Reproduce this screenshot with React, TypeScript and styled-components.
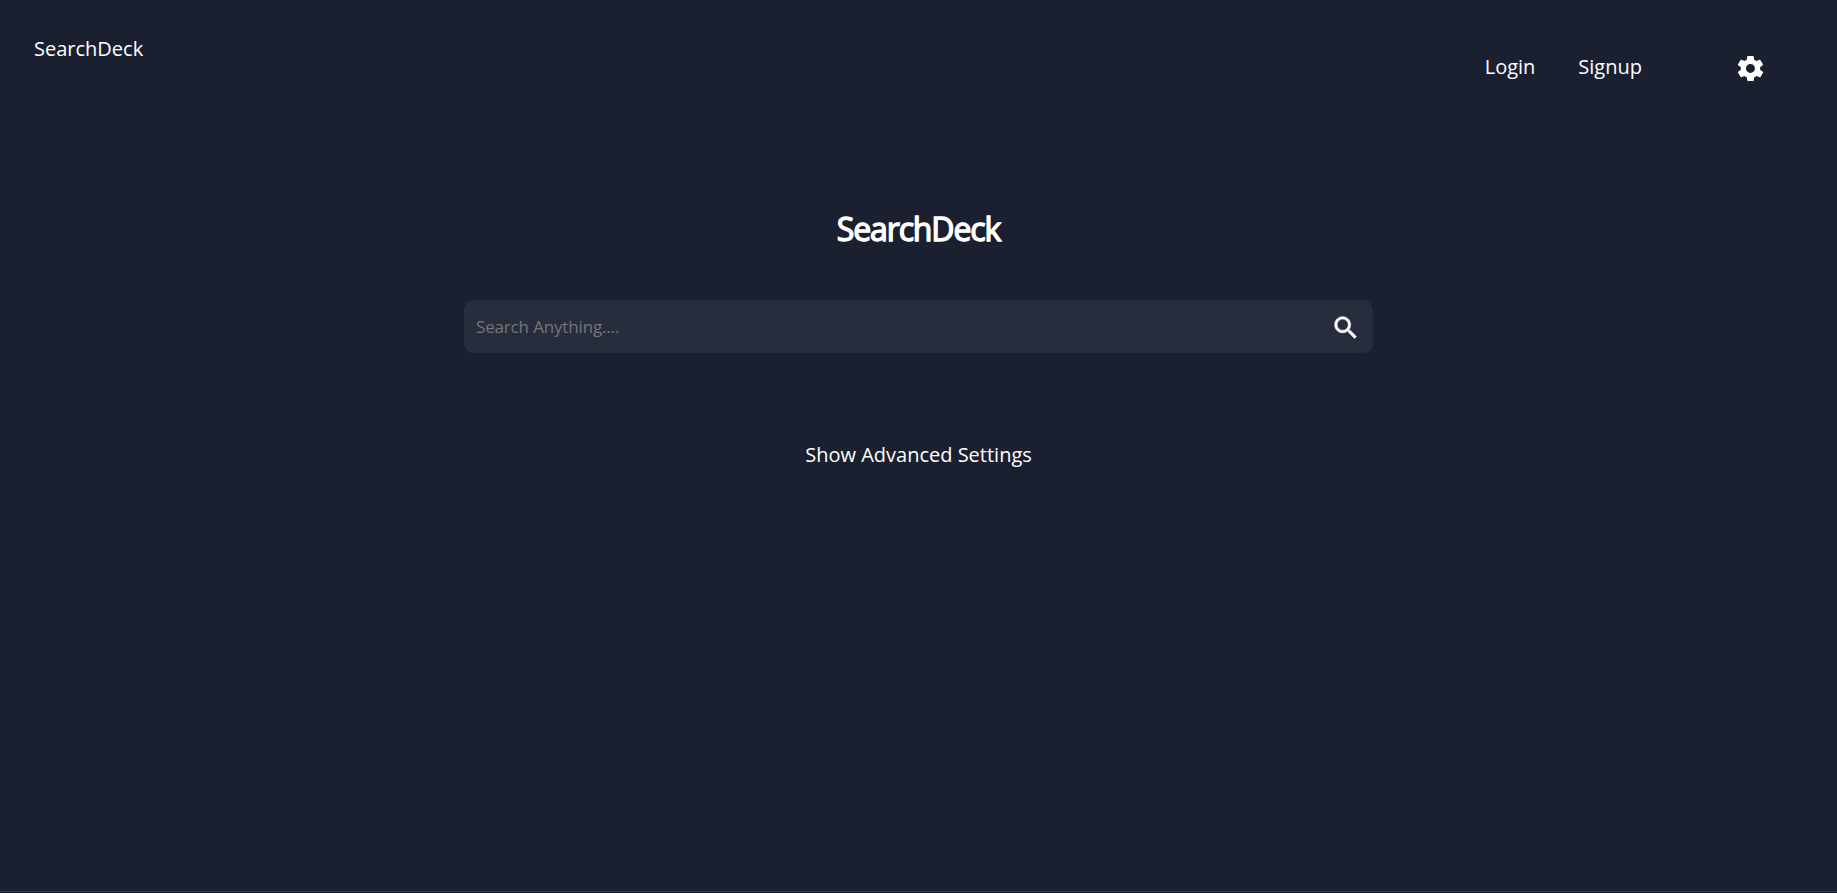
import React from "react";
import styled, { createGlobalStyle } from "styled-components";
import { IoMdSearch, IoMdSettings } from "react-icons/io";

const GlobalStyle = createGlobalStyle`
  * { box-sizing: border-box; }
  body { margin: 0; background: #1b2031; color: #fff; font-family: "Open Sans", sans-serif; font-size: 20px; }
`;
const Page = styled.div`
  height: 892px;
  overflow: hidden;
  display: flex;
  flex-direction: column;
  border-bottom: 1px solid #3a3e4b;
`;
const Header = styled.header`
  display: flex;
  justify-content: space-between;
  height: 134px;
  padding: 35px 71px 0 34px;
  line-height: 27px;
`;
const Brand = styled.span``;
const Nav = styled.nav`
  display: flex;
  align-items: center;
  height: 64px;
`;
const NavLink = styled.a`
  margin: -2px 43px 0 0;
`;
const GearIcon = styled(IoMdSettings)`
  width: 31px;
  height: 31px;
  margin: 2px 0 0 50px;
`;
const Main = styled.main`
  display: flex;
  flex-direction: column;
  align-items: center;
`;
const Title = styled.h1`
  margin: 73px 0 0;
  font-size: 32px;
  line-height: 43px;
  font-weight: 400;
  letter-spacing: -1.12px;
  -webkit-text-stroke: 1.35px #fff;
`;
const SearchBar = styled.form`
  display: flex;
  align-items: center;
  width: 909px;
  height: 53px;
  margin-top: 50px;
  padding: 0 13px 0 12px;
  border-radius: 10px;
  background: #282d3e;
`;
const SearchInput = styled.input`
  flex: 1;
  padding: 0;
  border: 0;
  outline: 0;
  background: transparent;
  color: #fff;
  font: 17px "Open Sans", sans-serif;
  letter-spacing: -0.16px;
  &::placeholder { color: #757575; }
`;
const SearchIcon = styled(IoMdSearch)`
  width: 29px;
  height: 29px;
  margin-top: 1px;
  stroke-width: 10;
`;
const Advanced = styled.div`
  margin-top: 88px;
  line-height: 27px;
`;

export default function App() {
  return (
    <Page>
      <GlobalStyle />
      <Header>
        <Brand>SearchDeck</Brand>
        <Nav>
          <NavLink>Login</NavLink>
          <NavLink>Signup</NavLink>
          <GearIcon />
        </Nav>
      </Header>
      <Main>
        <Title>SearchDeck</Title>
        <SearchBar>
          <SearchInput placeholder="Search Anything...." />
          <SearchIcon />
        </SearchBar>
        <Advanced>Show Advanced Settings</Advanced>
      </Main>
    </Page>
  );
}
